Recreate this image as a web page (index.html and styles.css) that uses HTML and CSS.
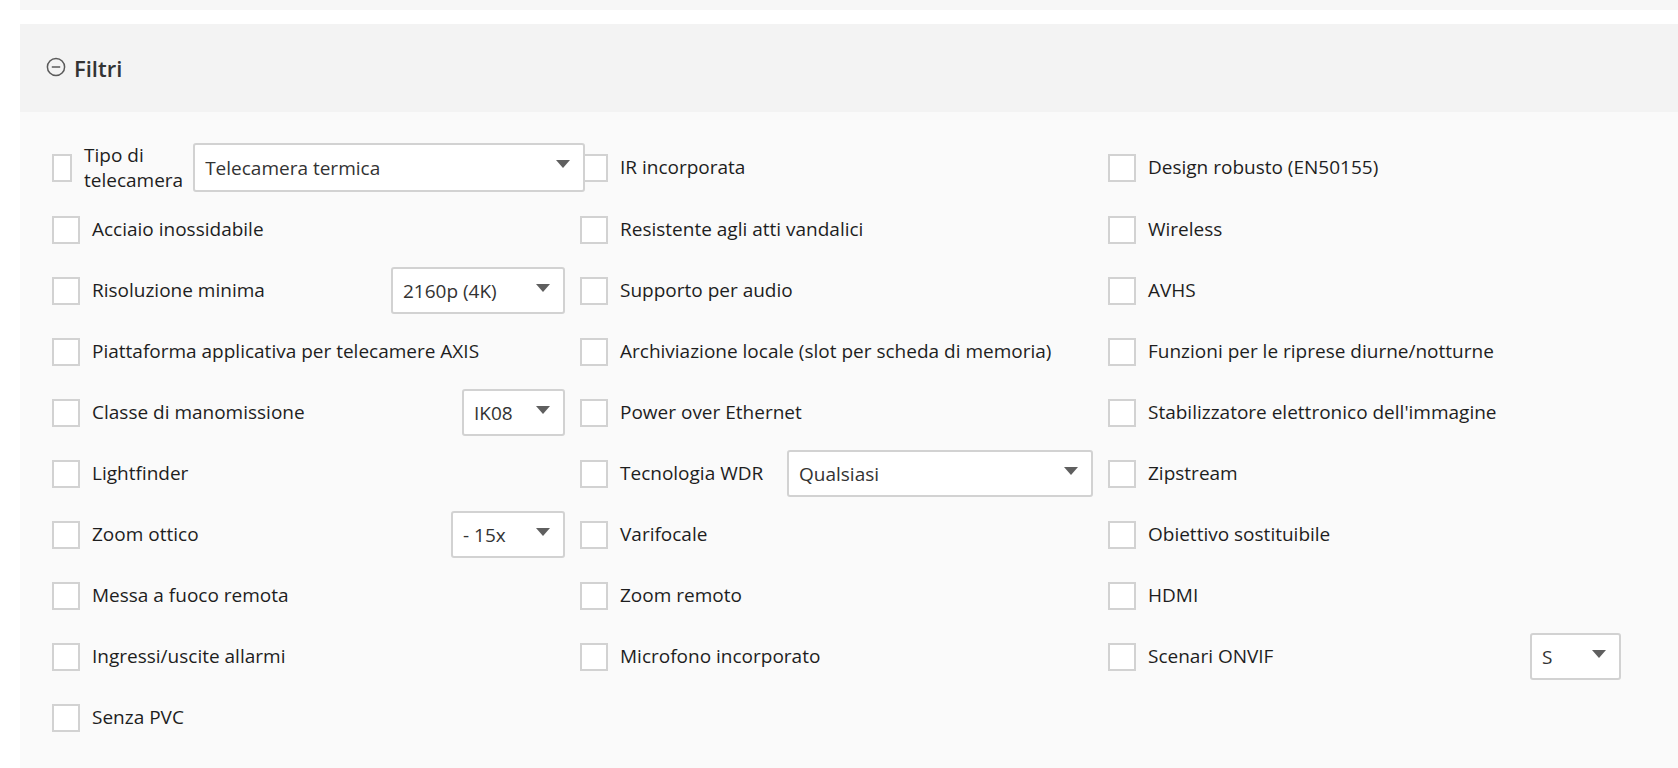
FILE: index.html
```html
<!DOCTYPE html>
<html lang="it">
<head>
    <meta charset="UTF-8">
    <meta name="viewport" content="width=device-width, initial-scale=1.0">
    <title>Filtri</title>
    <link rel="stylesheet" href="styles.css">
</head>
<body>

<div class="page">
    <div class="top-strip"></div>

    <!-- Pannello filtri -->
    <section class="filters">
        <div class="filters-header">
            <svg class="toggle-icon" width="20" height="20" viewBox="0 0 20 20">
                <circle cx="10" cy="10" r="8.6" fill="none" stroke="#5a5a5a" stroke-width="1.5"/>
                <line x1="5.8" y1="10" x2="14.2" y2="10" stroke="#5a5a5a" stroke-width="1.5"/>
            </svg>
            <h2>Filtri</h2>
        </div>

        <div class="filters-body">
            <!-- riga 1 -->
            <div class="filter-item">
                <span class="check"></span>
                <span class="label">Tipo di telecamera</span>
                <div class="select select-type">Telecamera termica</div>
            </div>
            <div class="filter-item">
                <span class="check"></span>
                <span class="label">IR incorporata</span>
            </div>
            <div class="filter-item">
                <span class="check"></span>
                <span class="label">Design robusto (EN50155)</span>
            </div>

            <!-- riga 2 -->
            <div class="filter-item">
                <span class="check"></span>
                <span class="label">Acciaio inossidabile</span>
            </div>
            <div class="filter-item">
                <span class="check"></span>
                <span class="label">Resistente agli atti vandalici</span>
            </div>
            <div class="filter-item">
                <span class="check"></span>
                <span class="label">Wireless</span>
            </div>

            <!-- riga 3 -->
            <div class="filter-item">
                <span class="check"></span>
                <span class="label">Risoluzione minima</span>
                <div class="select select-res">2160p (4K)</div>
            </div>
            <div class="filter-item">
                <span class="check"></span>
                <span class="label">Supporto per audio</span>
            </div>
            <div class="filter-item">
                <span class="check"></span>
                <span class="label">AVHS</span>
            </div>

            <!-- riga 4 -->
            <div class="filter-item">
                <span class="check"></span>
                <span class="label">Piattaforma applicativa per telecamere AXIS</span>
            </div>
            <div class="filter-item">
                <span class="check"></span>
                <span class="label">Archiviazione locale (slot per scheda di memoria)</span>
            </div>
            <div class="filter-item">
                <span class="check"></span>
                <span class="label">Funzioni per le riprese diurne/notturne</span>
            </div>

            <!-- riga 5 -->
            <div class="filter-item">
                <span class="check"></span>
                <span class="label">Classe di manomissione</span>
                <div class="select select-ik">IK08</div>
            </div>
            <div class="filter-item">
                <span class="check"></span>
                <span class="label">Power over Ethernet</span>
            </div>
            <div class="filter-item">
                <span class="check"></span>
                <span class="label">Stabilizzatore elettronico dell'immagine</span>
            </div>

            <!-- riga 6 -->
            <div class="filter-item">
                <span class="check"></span>
                <span class="label">Lightfinder</span>
            </div>
            <div class="filter-item">
                <span class="check"></span>
                <span class="label">Tecnologia WDR</span>
                <div class="select select-wdr">Qualsiasi</div>
            </div>
            <div class="filter-item">
                <span class="check"></span>
                <span class="label">Zipstream</span>
            </div>

            <!-- riga 7 -->
            <div class="filter-item">
                <span class="check"></span>
                <span class="label">Zoom ottico</span>
                <div class="select select-zoom">- 15x</div>
            </div>
            <div class="filter-item">
                <span class="check"></span>
                <span class="label">Varifocale</span>
            </div>
            <div class="filter-item">
                <span class="check"></span>
                <span class="label">Obiettivo sostituibile</span>
            </div>

            <!-- riga 8 -->
            <div class="filter-item">
                <span class="check"></span>
                <span class="label">Messa a fuoco remota</span>
            </div>
            <div class="filter-item">
                <span class="check"></span>
                <span class="label">Zoom remoto</span>
            </div>
            <div class="filter-item">
                <span class="check"></span>
                <span class="label">HDMI</span>
            </div>

            <!-- riga 9 -->
            <div class="filter-item">
                <span class="check"></span>
                <span class="label">Ingressi/uscite allarmi</span>
            </div>
            <div class="filter-item">
                <span class="check"></span>
                <span class="label">Microfono incorporato</span>
            </div>
            <div class="filter-item">
                <span class="check"></span>
                <span class="label">Scenari ONVIF</span>
                <div class="select select-onvif">S</div>
            </div>

            <!-- riga 10 -->
            <div class="filter-item">
                <span class="check"></span>
                <span class="label">Senza PVC</span>
            </div>
        </div>
    </section>
</div>

</body>
</html>
```

FILE: styles.css
```css
* {
    margin: 0;
    padding: 0;
    box-sizing: border-box;
}

body {
    background-color: #fff;
    color: #1e1e1e;
    font-family: 'Open Sans', 'Noto Sans', sans-serif;
}

.page {
    padding-left: 20px;
}

.top-strip {
    height: 10px;
    background: #f7f7f7;
    margin-bottom: 14px;
}

/* Intestazione del pannello */
.filters-header {
    height: 88px;
    display: flex;
    align-items: center;
    padding-left: 26px;
    background: #f3f3f3;
}

.toggle-icon {
    margin-right: 8px;
    margin-top: -2px;
}

.filters-header h2 {
    font-size: 22px;
    font-weight: 600;
    color: #333;
}

/* Griglia dei filtri */
.filters-body {
    background: #fafafa;
    padding: 31px 0 40px 32px;
    display: grid;
    grid-template-columns: repeat(3, 513px);
    column-gap: 15px;
    row-gap: 14px;
}

.filter-item {
    display: flex;
    align-items: center;
    min-height: 47px;
}

.check {
    width: 28px;
    min-width: 20px;
    height: 28px;
    flex-shrink: 1;
    background: #fff;
    border: 2px solid #d2d2d2;
}

.label {
    margin-left: 12px;
    font-size: 19px;
    line-height: 1.28;
    color: #1e1e1e;
}

.select {
    position: relative;
    z-index: 1;
    margin-left: auto;
    flex-shrink: 0;
    height: 47px;
    display: flex;
    align-items: center;
    padding-left: 10px;
    background: #fff;
    border: 2px solid #d2d2d2;
    border-radius: 3px;
    font-size: 19px;
    color: #333;
}

.select::after {
    content: "";
    position: absolute;
    right: 13px;
    top: 15px;
    border-left: 7px solid transparent;
    border-right: 7px solid transparent;
    border-top: 8px solid #5f5f5f;
}

.select-type {
    width: 392px;
    height: 49px;
    margin-left: 10px;
}

.select-res {
    width: 174px;
}

.select-ik {
    width: 103px;
}

.select-zoom {
    width: 114px;
}

.select-wdr {
    width: 306px;
}

.select-onvif {
    width: 91px;
}
```
